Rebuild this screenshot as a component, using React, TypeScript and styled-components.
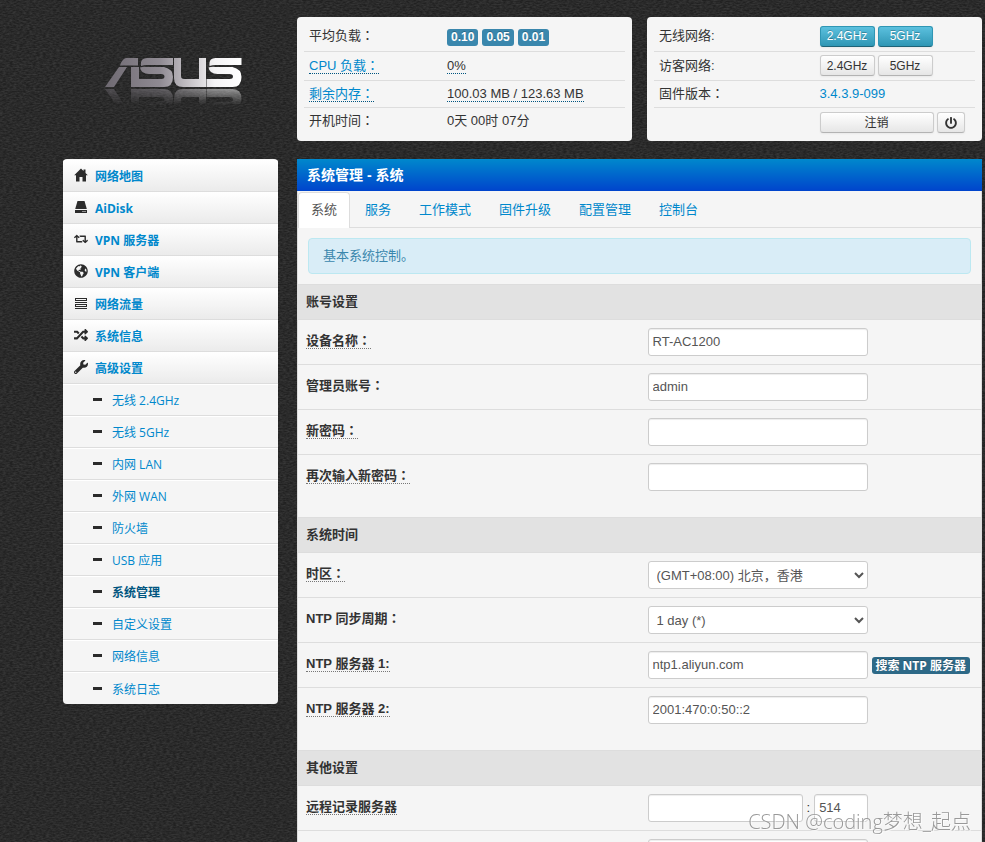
import React from "react";
import styled, { createGlobalStyle, css } from "styled-components";
import { FaRetweet, FaGlobeAmericas, FaRandom, FaWrench, FaPowerOff } from "react-icons/fa";

const arial = `"Liberation Sans", Arial, "Noto Sans CJK SC", sans-serif`;
const humanist = `"Open Sans", "Noto Sans CJK SC", sans-serif`;

const grain = `url("data:image/svg+xml,${encodeURIComponent(
  `<svg xmlns='http://www.w3.org/2000/svg' width='200' height='200'><filter id='n'><feTurbulence type='fractalNoise' baseFrequency='0.3 0.7' numOctaves='2' stitchTiles='stitch'/><feColorMatrix values='0 0 0 0 0.4  0 0 0 0 0.4  0 0 0 0 0.4  0.3 0 0 0 -0.08'/></filter><rect width='200' height='200' filter='url(#n)'/></svg>`
)}")`;

const GlobalStyle = createGlobalStyle`
  *, *::before, *::after { box-sizing: border-box; }
  body {
    margin: 0;
    background: #212121 ${grain};
    color: #333;
    font: 13px/18px ${arial};
  }
  a { color: #08c; text-decoration: none; }
  button, input, select { font-family: inherit; }
`;

const Page = styled.div`
  height: 100vh;
  overflow: hidden;
  padding: 17px 3px 0 63px;
  display: grid;
  grid-template-columns: 215px minmax(0, 1fr);
  grid-template-rows: auto 1fr;
  column-gap: 19px;
  row-gap: 18px;
`;

const LogoCell = styled.div`
  padding: 41px 0 0 42px;
`;

const StatusBoxes = styled.div`
  display: grid;
  grid-template-columns: 1fr 1fr;
  gap: 15px;
`;

const Box = styled.section`
  height: 124px;
  padding: 5px 7px;
  background: #f5f5f5;
  border-radius: 4px;
`;

const StatusTable = styled.table<{ $first: number }>`
  width: 100%;
  table-layout: fixed;
  border-collapse: collapse;
  th, td {
    padding: 0 5px;
    text-align: left;
    font-weight: normal;
    white-space: nowrap;
  }
  th { width: ${(p) => p.$first}%; }
  tr + tr { border-top: 1px solid #ddd; }
`;

const StatusRow = styled.tr<{ $h: number }>`
  height: ${(p) => p.$h}px;
`;

const Dotted = styled.span`
  border-bottom: 1px dotted #005580;
`;

const DottedLink = styled.a`
  border-bottom: 1px dotted #005580;
`;

/* The full-width colon sits in the middle of its cell in this face. */
const Colon = styled.span`
  font-family: "Noto Sans CJK TC", sans-serif;
  line-height: 1;
`;

const Badges = styled.div`
  display: flex;
  gap: 4px;
  padding-top: 2px;
`;

const Badge = styled.span`
  padding: 0 4px;
  border-radius: 3px;
  background: #3a87ad;
  color: #fff;
  font: bold 12px/17px ${arial};
  text-shadow: 0 -1px 0 rgba(0, 0, 0, 0.25);
`;

const Buttons = styled.div`
  display: flex;
  gap: 3px;
`;

const Button = styled.button<{ $w: number; $info?: boolean }>`
  display: flex;
  align-items: center;
  justify-content: center;
  width: ${(p) => p.$w}px;
  height: 21px;
  padding: 0;
  border: 1px solid #ccc;
  border-bottom-color: #b3b3b3;
  border-radius: 3px;
  background: linear-gradient(#fff, #e6e6e6);
  color: #333;
  font-size: 12px;
  line-height: 18px;
  box-shadow: 0 1px 2px rgba(0, 0, 0, 0.05);
  ${(p) =>
    p.$info &&
    css`
      border-color: #2f96b4 #2f96b4 #1f6377;
      background: linear-gradient(#5bc0de, #2f96b4);
      color: #fff;
      text-shadow: 0 -1px 0 rgba(0, 0, 0, 0.25);
    `}
`;

const Nav = styled.nav`
  align-self: start;
  padding-top: 1px;
  border-radius: 4px;
  overflow: hidden;
  background: #f5f5f5;
  font: 12px/18px ${humanist};
`;

const NavItem = styled.a`
  display: flex;
  align-items: center;
  gap: 7px;
  height: 32px;
  padding: 2px 11px 0;
  border-bottom: 1px solid #ddd;
  background: linear-gradient(#fff, #ebebeb);
  font-weight: bold;
  svg {
    flex: none;
    width: 14px;
    height: 14px;
    margin-bottom: 4px;
    color: #2b2b2b;
  }
`;

const SubItem = styled.a<{ $active?: boolean }>`
  display: flex;
  align-items: center;
  gap: 10px;
  height: 32px;
  padding: 2px 30px 0;
  border-top: 1px solid #fff;
  border-bottom: 1px solid #ddd;
  ${(p) => p.$active && css`color: #005580; font-weight: bold;`}
  &:last-child { border-bottom: 0; }
  &::before {
    content: "";
    width: 9px;
    height: 3px;
    margin-bottom: 3px;
    background: #2b2b2b;
  }
`;

const Panel = styled.main`
  align-self: start;
  border-radius: 4px;
  background: #f5f5f5;
`;

const PanelTitle = styled.h1`
  margin: 0;
  padding: 0 10px;
  background: linear-gradient(#08c, #04c);
  color: #fff;
  font: bold 14px/32px ${arial};
`;

const PanelBody = styled.div`
  border: 1px solid #ddd;
  border-top: 0;
`;

const Tabs = styled.div`
  display: flex;
  height: 37px;
  padding: 1px 1px 0 0;
  border-bottom: 1px solid #ddd;
`;

const Tab = styled.a<{ $active?: boolean }>`
  height: 36px;
  margin-right: 2px;
  padding: 0 12px;
  border: 1px solid transparent;
  border-bottom: 0;
  border-radius: 4px 4px 0 0;
  line-height: 34px;
  ${(p) =>
    p.$active &&
    css`
      border-color: #ddd;
      background: #fff;
      color: #555;
    `}
`;

const Alert = styled.div`
  margin: 10px;
  padding: 8px 14px;
  border: 1px solid #bce8f1;
  border-radius: 4px;
  background: #d9edf7;
  color: #3a87ad;
`;

const FormTable = styled.table`
  width: 100%;
  margin-bottom: 18px;
  table-layout: fixed;
  border-collapse: separate;
  border-spacing: 0;
  th, td {
    padding: 8px;
    border-top: 1px solid #ddd;
    text-align: left;
    vertical-align: top;
  }
  thead th {
    height: 35px;
    background: #e2e2e2;
    line-height: 18px;
  }
  tbody th { line-height: 26px; }
`;

const Control = styled.div`
  display: flex;
  align-items: center;
  gap: 4px;
  height: 28px;
`;

const FieldLabel = styled.label<{ $hint?: boolean }>`
  ${(p) => p.$hint && css`border-bottom: 1px dotted #777;`}
`;

const fieldStyle = css`
  height: 28px;
  border: 1px solid #ccc;
  border-radius: 3px;
  background: #fff;
  color: #555;
  font-size: 13px;
  flex: none;
`;

const Input = styled.input<{ $w?: number }>`
  ${fieldStyle}
  width: ${(p) => p.$w ?? 220}px;
  padding: 0 4px 1px;
  box-shadow: inset 0 1px 1px rgba(0, 0, 0, 0.075);
`;

const Select = styled.select`
  ${fieldStyle}
  width: 220px;
  padding: 0 4px;
`;

const SearchLink = styled.a`
  padding: 0 4px;
  border-radius: 3px;
  background: #2d6987;
  color: #fff;
  font: bold 12px/17px ${humanist};
  white-space: nowrap;
  text-shadow: 0 -1px 0 rgba(0, 0, 0, 0.25);
`;

const Watermark = styled.div`
  position: fixed;
  right: 14px;
  bottom: 6px;
  color: #999;
  font: 300 20px/28px ${humanist};
  text-shadow: 1px 1px 0 rgba(255, 255, 255, 0.7);
  pointer-events: none;
`;

const S_SHAPE =
  "M8 0H34V7H8Q5 7 2 8Q1 0 8 0Z M1 9.5Q4 8.5 8 9H25Q34 11 34 19Q34 29 25 29H-1V21H22Q25.500 21 25.500 18.500Q25.500 16 22 16H10Q2 16 1 9.500Z";

function Logo() {
  return (
    <svg width="138" height="50" viewBox="0 0 138 50" role="img" aria-label="ASUS">
      <defs>
        <linearGradient id="metal" gradientUnits="userSpaceOnUse" x1="0" y1="0" x2="137" y2="0">
          <stop offset="0" stopColor="#6f6a72" />
          <stop offset="0.4" stopColor="#8f8a92" />
          <stop offset="0.65" stopColor="#cfccd0" />
          <stop offset="0.8" stopColor="#f4f3f5" />
          <stop offset="1" stopColor="#fff" />
        </linearGradient>
        <linearGradient id="fade" x1="0" y1="0" x2="0" y2="1">
          <stop offset="0" stopColor="#fff" stopOpacity="0.5" />
          <stop offset="1" stopColor="#fff" stopOpacity="0" />
        </linearGradient>
        <mask id="mirror" maskUnits="userSpaceOnUse" x="0" y="31" width="138" height="16">
          <rect x="0" y="31" width="138" height="16" fill="url(#fade)" />
        </mask>
        <clipPath id="mark">
          <path d="M21 0H33V7.500H15Q17 1 21 0Z M14 9H22L9 29H0Z M26 9H34V29H26Z" />
          <path transform="translate(34 0)" d={S_SHAPE} />
          <path d="M69 0H76V18Q76 21 79 21H94V0H101V29H78Q69 29 69 20Z" />
          <path transform="translate(102.500 0)" d={S_SHAPE} />
        </clipPath>
      </defs>
      <rect width="137" height="29" fill="url(#metal)" clipPath="url(#mark)" />
      <g mask="url(#mirror)">
        <g transform="translate(0 60) scale(1 -1)">
          <rect width="137" height="29" fill="url(#metal)" clipPath="url(#mark)" />
        </g>
      </g>
    </svg>
  );
}

const HomeIcon = () => (
  <svg viewBox="0 0 14 14" fill="currentColor" aria-hidden="true">
    <path d="M7 .5 9.500 3V1.500H11.500V5L13.800 7.300H12V13.500H8.500V9H5.500V13.500H2V7.300H.2Z" />
  </svg>
);

const DiskIcon = () => (
  <svg viewBox="0 0 14 14" fill="currentColor" aria-hidden="true">
    <path d="M3.500 1H10.500L12.800 9H1.200Z" />
    <path fillRule="evenodd" d="M1 10H13V13H1Z M8.500 11V12H9.500V11Z M10.500 11V12H11.500V11Z" />
  </svg>
);

const TasksIcon = () => (
  <svg viewBox="0 0 14 14" fill="currentColor" aria-hidden="true">
    <path
      fillRule="evenodd"
      d="M1 2H13V5H1Z M2 3V4H12V3Z M1 6H13V7H1Z M1 8H13V11H1Z M2 9V10H12V9Z M1 12H13V13H1Z"
    />
  </svg>
);

const menu: [React.ComponentType, string][] = [
  [HomeIcon, "网络地图"],
  [DiskIcon, "AiDisk"],
  [FaRetweet, "VPN 服务器"],
  [FaGlobeAmericas, "VPN 客户端"],
  [TasksIcon, "网络流量"],
  [FaRandom, "系统信息"],
  [FaWrench, "高级设置"],
];

const submenu = [
  "无线 2.4GHz", "无线 5GHz", "内网 LAN", "外网 WAN", "防火墙",
  "USB 应用", "系统管理", "自定义设置", "网络信息", "系统日志",
];

const tabs = ["系统", "服务", "工作模式", "固件升级", "配置管理", "控制台"];

function Caption({ text }: { text: string }) {
  return text.endsWith("：") ? <>{text.slice(0, -1)}<Colon>：</Colon></> : <>{text}</>;
}

function Field(props: { id: string; label: string; hint?: boolean; children: React.ReactNode }) {
  return (
    <tr>
      <th scope="row">
        <FieldLabel htmlFor={props.id} $hint={props.hint}><Caption text={props.label} /></FieldLabel>
      </th>
      <td>
        <Control>{props.children}</Control>
      </td>
    </tr>
  );
}

function Section(props: { title: string; children: React.ReactNode }) {
  return (
    <FormTable>
      <thead>
        <tr><th colSpan={2}>{props.title}</th></tr>
      </thead>
      <tbody>{props.children}</tbody>
    </FormTable>
  );
}

export default function App() {
  return (
    <>
      <GlobalStyle />
      <Page>
        <LogoCell><Logo /></LogoCell>
        <StatusBoxes>
          <Box>
            <StatusTable $first={43}>
              <tbody>
                <StatusRow $h={29}>
                  <th scope="row"><Caption text="平均负载：" /></th>
                  <td><Badges><Badge>0.10</Badge><Badge>0.05</Badge><Badge>0.01</Badge></Badges></td>
                </StatusRow>
                <StatusRow $h={29}>
                  <th scope="row"><DottedLink href="#cpu"><Caption text="CPU 负载：" /></DottedLink></th>
                  <td><Dotted>0%</Dotted></td>
                </StatusRow>
                <StatusRow $h={27}>
                  <th scope="row"><DottedLink href="#mem"><Caption text="剩余内存：" /></DottedLink></th>
                  <td><Dotted>100.03 MB / 123.63 MB</Dotted></td>
                </StatusRow>
                <StatusRow $h={27}>
                  <th scope="row"><Caption text="开机时间：" /></th>
                  <td>0天 00时 07分</td>
                </StatusRow>
              </tbody>
            </StatusTable>
          </Box>
          <Box>
            <StatusTable $first={50}>
              <tbody>
                <StatusRow $h={29}>
                  <th scope="row">无线网络:</th>
                  <td><Buttons><Button $w={55} $info>2.4GHz</Button><Button $w={55} $info>5GHz</Button></Buttons></td>
                </StatusRow>
                <StatusRow $h={29}>
                  <th scope="row">访客网络:</th>
                  <td><Buttons><Button $w={55}>2.4GHz</Button><Button $w={55}>5GHz</Button></Buttons></td>
                </StatusRow>
                <StatusRow $h={27}>
                  <th scope="row"><Caption text="固件版本：" /></th>
                  <td><a href="#firmware">3.4.3.9-099</a></td>
                </StatusRow>
                <StatusRow $h={31}>
                  <th />
                  <td>
                    <Buttons>
                      <Button $w={114}>注销</Button>
                      <Button $w={28} aria-label="重启"><FaPowerOff size={12} /></Button>
                    </Buttons>
                  </td>
                </StatusRow>
              </tbody>
            </StatusTable>
          </Box>
        </StatusBoxes>

        <Nav>
          {menu.map(([Icon, text]) => (
            <NavItem key={text} href="#menu"><Icon />{text}</NavItem>
          ))}
          {submenu.map((text) => (
            <SubItem key={text} href="#submenu" $active={text === "系统管理"}>{text}</SubItem>
          ))}
        </Nav>

        <Panel>
          <PanelTitle>系统管理 - 系统</PanelTitle>
          <PanelBody>
            <Tabs>
              {tabs.map((text, i) => (
                <Tab key={text} href="#tab" $active={i === 0}>{text}</Tab>
              ))}
            </Tabs>
            <Alert>基本系统控制。</Alert>
            <Section title="账号设置">
              <Field id="name" label="设备名称：" hint><Input id="name" defaultValue="RT-AC1200" /></Field>
              <Field id="user" label="管理员账号："><Input id="user" defaultValue="admin" /></Field>
              <Field id="pass" label="新密码：" hint><Input id="pass" type="password" /></Field>
              <Field id="pass2" label="再次输入新密码：" hint><Input id="pass2" type="password" /></Field>
            </Section>
            <Section title="系统时间">
              <Field id="zone" label="时区：" hint>
                <Select id="zone"><option>(GMT+08:00) 北京，香港</option></Select>
              </Field>
              <Field id="period" label="NTP 同步周期：">
                <Select id="period"><option>1 day (*)</option></Select>
              </Field>
              <Field id="ntp1" label="NTP 服务器 1:" hint>
                <Input id="ntp1" defaultValue="ntp1.aliyun.com" />
                <SearchLink href="#ntp">搜索 NTP 服务器</SearchLink>
              </Field>
              <Field id="ntp2" label="NTP 服务器 2:" hint><Input id="ntp2" defaultValue="2001:470:0:50::2" /></Field>
            </Section>
            <Section title="其他设置">
              <Field id="log" label="远程记录服务器" hint>
                <Input id="log" $w={155} />:<Input $w={54} aria-label="端口" defaultValue="514" />
              </Field>
              <Field id="extra" label=""><Input id="extra" /></Field>
            </Section>
          </PanelBody>
        </Panel>
      </Page>
      <Watermark>CSDN @coding梦想_起点</Watermark>
    </>
  );
}
